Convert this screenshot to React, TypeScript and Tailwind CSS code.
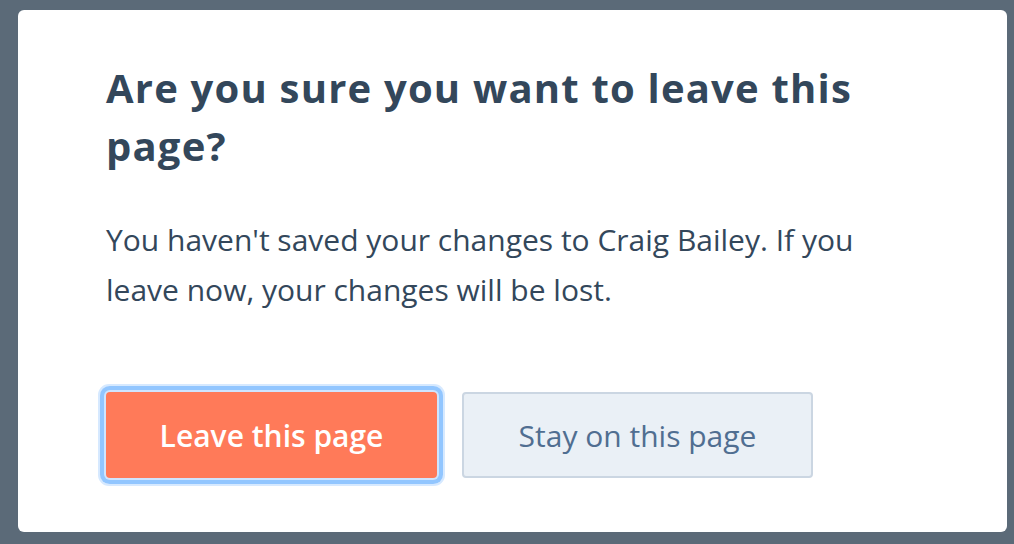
import React from "react";

const App: React.FC = () => {
  return (
    <div className="min-h-screen w-full bg-[#5b6a78] pt-[10px] pl-[18px] pr-[7px] pb-[12px] font-['Open_Sans','Noto_Sans',sans-serif]">
      <div className="bg-white rounded-[6px] h-[522px] pl-[88px] pr-[88px] pt-[49px]">
        <h2 className="text-[40px] leading-[58px] font-bold tracking-[0.03em] text-[#33475b]">
          Are you sure you want to leave this page?
        </h2>
        <p className="mt-[40px] text-[30px] leading-[50px] text-[#33475b]">
          You haven't saved your changes to Craig Bailey. If you leave now,
          your changes will be lost.
        </p>
        <div className="mt-[77px] flex items-center gap-[25px]">
          <button className="w-[331px] h-[86px] rounded-[4px] bg-[#ff7a59] text-white text-[30px] font-semibold shadow-[0_0_0_2px_#cfe5ff,0_0_0_6px_#92c6ff,0_0_0_8px_#d6e9ff]">
            Leave this page
          </button>
          <button className="w-[351px] h-[86px] rounded-[4px] bg-[#eaf0f6] border-2 border-[#cbd6e2] text-[#506e91] text-[30px]">
            Stay on this page
          </button>
        </div>
      </div>
    </div>
  );
};

export default App;
